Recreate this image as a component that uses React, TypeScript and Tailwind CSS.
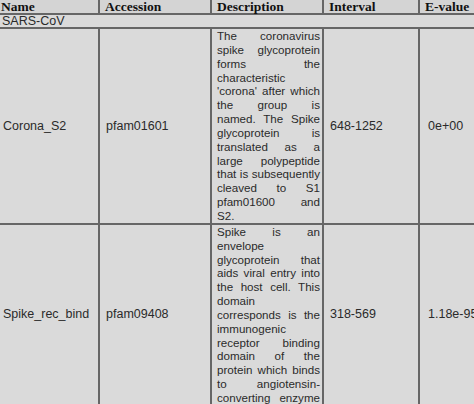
const sans = "font-['Liberation_Sans',Arial,sans-serif]";
const serif = "font-['Liberation_Serif','Times_New_Roman',serif]";

const rows = [
  {
    name: "Corona_S2",
    accession: "pfam01601",
    interval: "648-1252",
    evalue: "0e+00",
    lines: [
      "The coronavirus",
      "spike glycoprotein",
      "forms the",
      "characteristic",
      "'corona' after which",
      "the group is",
      "named. The Spike",
      "glycoprotein is",
      "translated as a",
      "large polypeptide",
      "that is subsequently",
      "cleaved to S1",
      "pfam01600 and",
      "S2.",
    ],
  },
  {
    name: "Spike_rec_bind",
    accession: "pfam09408",
    interval: "318-569",
    evalue: "1.18e-95",
    lines: [
      "Spike is an",
      "envelope",
      "glycoprotein that",
      "aids viral entry into",
      "the host cell. This",
      "domain",
      "corresponds is the",
      "immunogenic",
      "receptor binding",
      "domain of the",
      "protein which binds",
      "to angiotensin-",
      "converting enzyme",
    ],
  },
];

const border = "border-[#666666]";

export default function App() {
  return (
    <div className="h-[404px] w-[474px] overflow-hidden bg-[#dadada]">
      <table
        className={`-ml-[6px] table-fixed border-collapse text-[#2a2a2a] ${sans}`}
        style={{ width: 540 }}
      >
        <colgroup>
          <col className="w-[104px]" />
          <col className="w-[112px]" />
          <col className="w-[112px]" />
          <col className="w-[96px]" />
          <col className="w-[116px]" />
        </colgroup>
        <thead>
          <tr className={`bg-[#d4d4d4] text-left text-[13.5px] leading-[13px] text-[#111] ${serif}`}>
            {["Name", "Accession", "Description", "Interval", "E-value"].map((h) => (
              <th
                key={h}
                className={`border-x-2 border-b-2 ${border} px-[5px] py-0 align-top font-bold`}
              >
                {h}
              </th>
            ))}
          </tr>
        </thead>
        <tbody>
          <tr>
            <td colSpan={5} className={`border-b-2 ${border} px-[7px] py-0 text-[12.5px] leading-[12px]`}>
              SARS-CoV
            </td>
          </tr>
          {rows.map((r) => (
            <tr key={r.name} className="text-[12.5px]">
              <td className={`border-x-2 border-b-2 ${border} px-[7px] align-middle`}>{r.name}</td>
              <td className={`border-x-2 border-b-2 ${border} px-[6px] align-middle`}>{r.accession}</td>
              <td className={`border-x-2 border-b-2 ${border} pl-[5px] pr-[2px] py-0 align-top`}>
                {r.lines.map((l, i) => (
                  <div
                    key={i}
                    className="whitespace-nowrap text-justify text-[11.6px] leading-[13.85px] [text-align-last:justify]"
                  >
                    {l}
                  </div>
                ))}
              </td>
              <td className={`border-x-2 border-b-2 ${border} px-[6px] align-middle`}>{r.interval}</td>
              <td className={`border-x-2 border-b-2 ${border} px-[8px] align-middle`}>{r.evalue}</td>
            </tr>
          ))}
        </tbody>
      </table>
    </div>
  );
}
